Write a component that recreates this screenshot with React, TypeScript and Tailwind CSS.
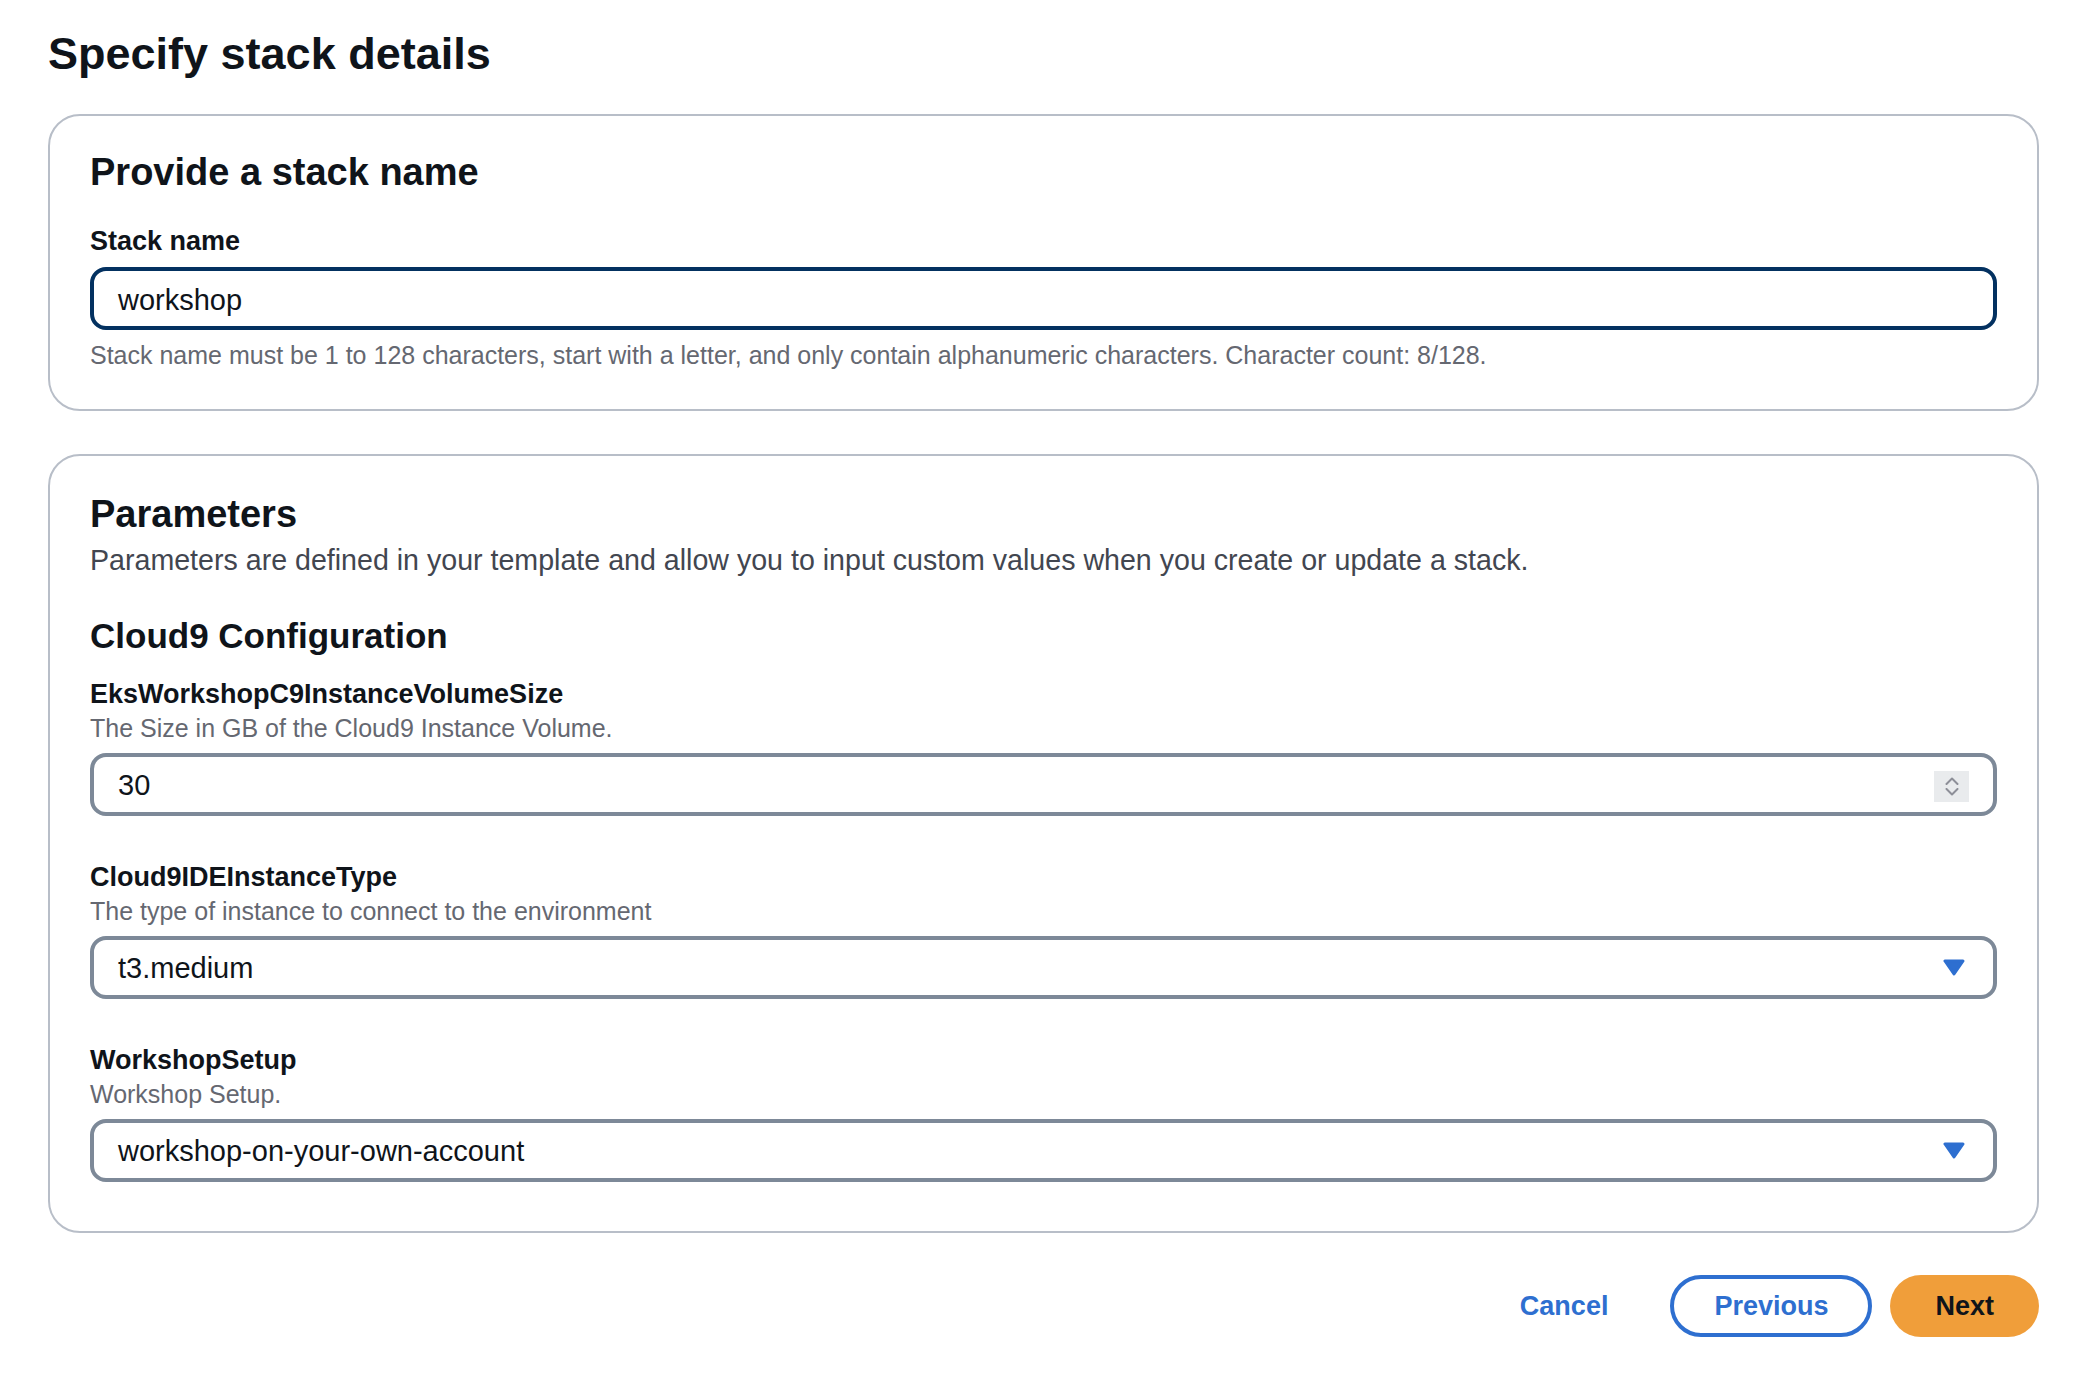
import React from 'react'

const font = "font-['Liberation_Sans',Arial,sans-serif]"

function Caret() {
    return (
        <svg width="22" height="17" viewBox="0 0 22 17" className="shrink-0">
            <polygon points="2,2 20,2 11,15" fill="#2e6fd0" stroke="#2e6fd0" strokeWidth="3" strokeLinejoin="round" />
        </svg>
    )
}

function Spinner() {
    return (
        <div className="w-[35px] h-[31px] bg-[#e9ebed] flex flex-col items-center justify-center gap-[3px] shrink-0">
            <svg width="14" height="8" viewBox="0 0 14 8">
                <polyline points="1.5,7 7,1.5 12.5,7" fill="none" stroke="#8d8f98" strokeWidth="2" strokeLinecap="round" strokeLinejoin="round" />
            </svg>
            <svg width="14" height="8" viewBox="0 0 14 8">
                <polyline points="1.5,1 7,6.5 12.5,1" fill="none" stroke="#8d8f98" strokeWidth="2" strokeLinecap="round" strokeLinejoin="round" />
            </svg>
        </div>
    )
}

function Field({
    label,
    description,
    value,
    kind,
}: {
    label: string
    description: string
    value: string
    kind: 'number' | 'select'
}) {
    return (
        <div className="flex flex-col">
            <div className="text-[27px] leading-[36px] font-bold text-[#0f141a]">{label}</div>
            <div className="text-[25px] leading-[32px] text-[#656871]">{description}</div>
            <div className="mt-[9px] h-[63px] rounded-[16px] border-4 border-[#7d8998] flex items-center justify-between pl-[24px] pr-[24px] pt-[3px]">
                <span className="text-[29px] text-[#0f141a]">{value}</span>
                {kind === 'number' ? <Spinner /> : <span className="pr-[4px] -mt-[3px] flex"><Caret /></span>}
            </div>
        </div>
    )
}

export default function App() {
    return (
        <div className={`${font} min-h-screen bg-white pl-[48px] pr-[49px] pt-[26px] pb-[36px]`}>
            <h1 className="text-[45px] leading-[56px] font-bold text-[#0f141a]">Specify stack details</h1>

            {/* stack name */}
            <section className="mt-[32px] rounded-[32px] border-2 border-[#b8bec8] px-[40px] pt-[33px] pb-[38px]">
                <h2 className="text-[38px] leading-[46px] font-bold text-[#0f141a]">Provide a stack name</h2>
                <div className="mt-[28px] text-[27px] leading-[36px] font-bold text-[#0f141a]">Stack name</div>
                <div className="mt-[8px] h-[63px] rounded-[16px] border-4 border-[#033160] flex items-center pl-[24px] pt-[4px]">
                    <span className="text-[29px] text-[#0f141a]">workshop</span>
                </div>
                <p className="mt-[9px] text-[25px] leading-[32px] text-[#656871]">
                    Stack name must be 1 to 128 characters, start with a letter, and only contain alphanumeric characters. Character count: 8/128.
                </p>
            </section>

            {/* parameters */}
            <section className="mt-[43px] rounded-[32px] border-2 border-[#b8bec8] px-[40px] pt-[35px] pb-[49px]">
                <h2 className="text-[38px] leading-[46px] font-bold text-[#0f141a]">Parameters</h2>
                <p className="mt-[4px] text-[28.6px] leading-[38px] text-[#424650]">
                    Parameters are defined in your template and allow you to input custom values when you create or update a stack.
                </p>
                <h3 className="mt-[35px] text-[35px] leading-[44px] font-bold text-[#0f141a]">Cloud9 Configuration</h3>
                <div className="mt-[18px] flex flex-col gap-[43px]">
                    <Field
                        label="EksWorkshopC9InstanceVolumeSize"
                        description="The Size in GB of the Cloud9 Instance Volume."
                        value="30"
                        kind="number"
                    />
                    <Field
                        label="Cloud9IDEInstanceType"
                        description="The type of instance to connect to the environment"
                        value="t3.medium"
                        kind="select"
                    />
                    <Field
                        label="WorkshopSetup"
                        description="Workshop Setup."
                        value="workshop-on-your-own-account"
                        kind="select"
                    />
                </div>
            </section>

            <div className="mt-[42px] flex justify-end items-center gap-[18px]">
                <button className="h-[62px] px-[40px] border-4 border-transparent rounded-full text-[27px] font-bold text-[#2e6fd0]">
                    Cancel
                </button>
                <button className="h-[62px] px-[40px] border-4 border-[#2e6fd0] rounded-full text-[27px] font-bold text-[#2e6fd0] bg-white">
                    Previous
                </button>
                <button className="h-[62px] px-[41px] border-4 border-transparent rounded-full text-[27px] font-bold text-[#0f141a] bg-[#f09e3a]">
                    Next
                </button>
            </div>
        </div>
    )
}
